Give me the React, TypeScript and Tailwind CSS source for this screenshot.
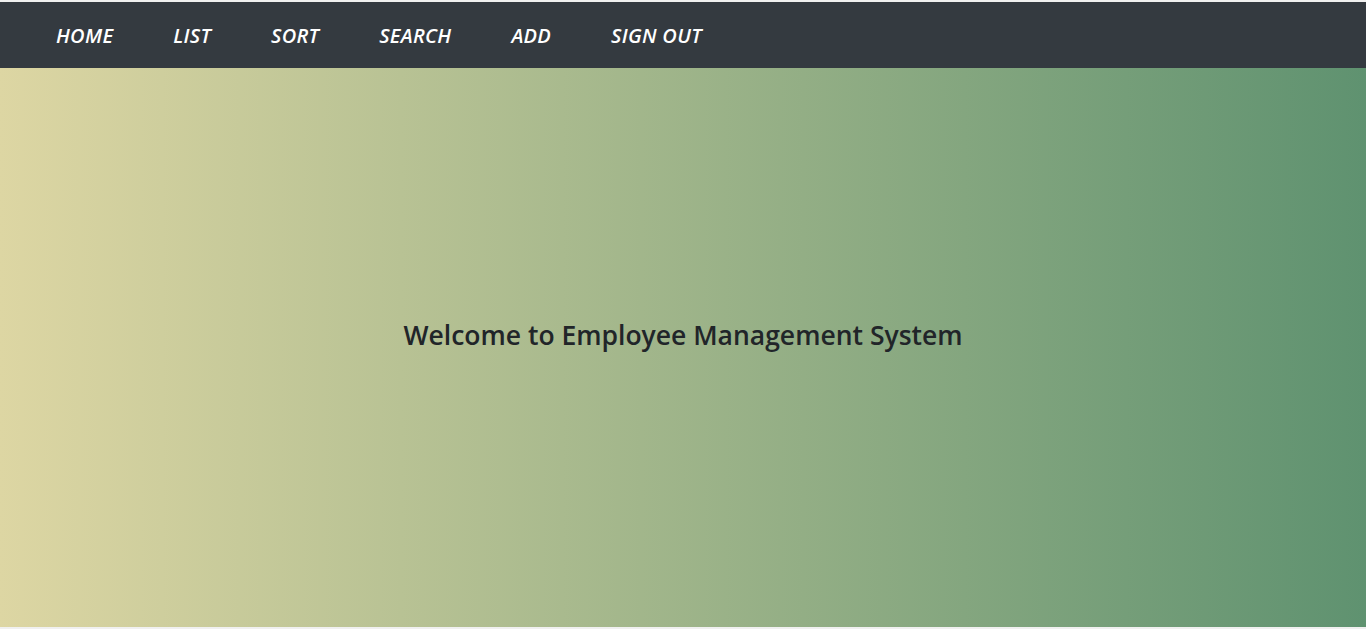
import React from "react";

const links = ["HOME", "LIST", "SORT", "SEARCH", "ADD", "SIGN OUT"];

export default function App() {
  return (
    <div className="flex h-[629px] w-full flex-col bg-[#f0f0f0] pt-[2px]" style={{ fontFamily: '"Open Sans", "Noto Sans", sans-serif' }}>
      <nav className="flex h-[66px] items-center bg-[#343a40] pl-[26px] pt-[2px]">
        {links.map((l) => (
          <a key={l} href="#" className="px-[30px] text-[20px] font-semibold italic leading-none tracking-[0.3px] text-white">
            {l}
          </a>
        ))}
      </nav>
      <main className="flex h-[559px] items-center justify-center bg-[linear-gradient(to_right,#ddd6a3,#5f9270)] pb-[24px]">
        <h1 className="text-[26.5px] font-semibold leading-none text-[#212529]">Welcome to Employee Management System</h1>
      </main>
    </div>
  );
}
